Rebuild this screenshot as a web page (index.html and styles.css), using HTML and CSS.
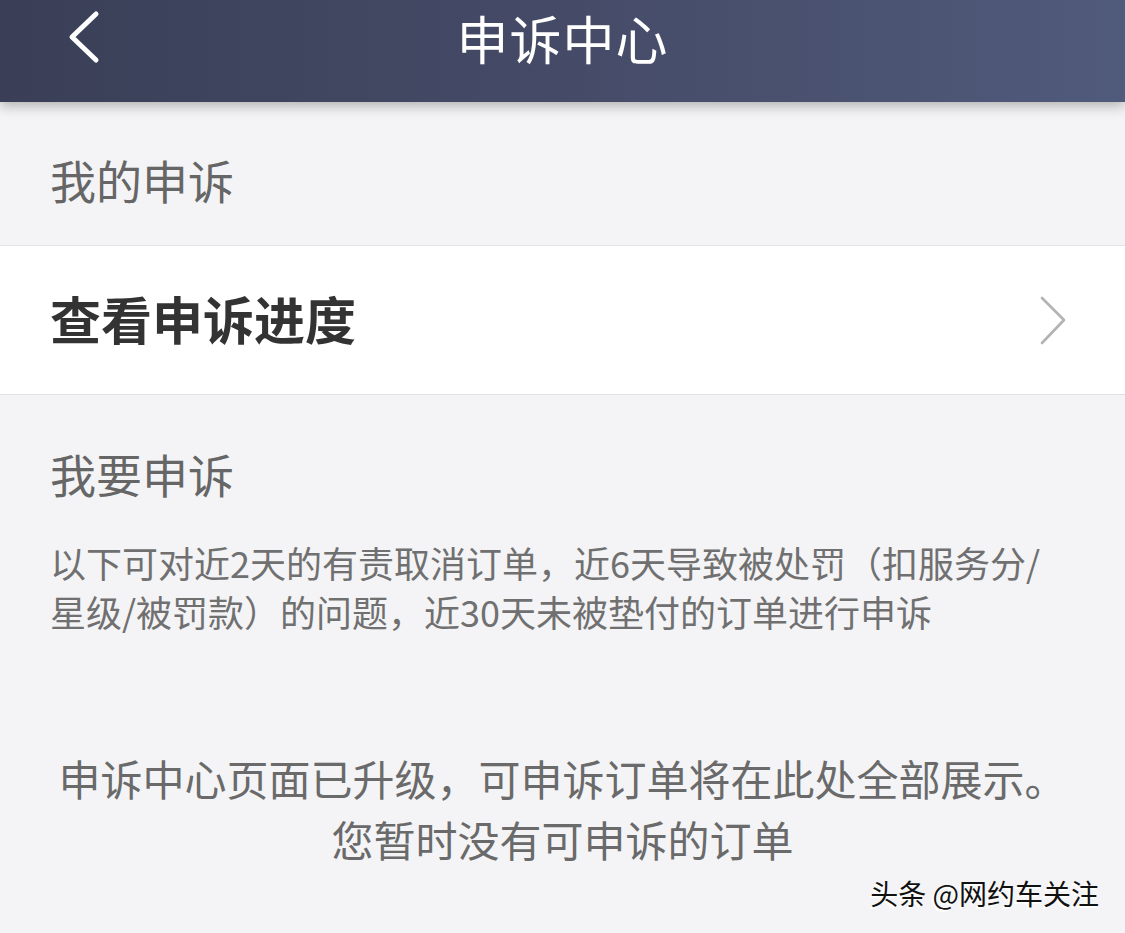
FILE: index.html
```html
<!DOCTYPE html>
<html lang="zh-CN">
<head>
<meta charset="utf-8">
<title>申诉中心</title>
<link rel="stylesheet" href="styles.css">
</head>
<body>
<div class="page">
  <header class="topbar">
    <div class="topbar-row">
      <div class="back">
        <svg class="back-icon" width="34" height="54" viewBox="0 0 34 54">
          <polyline points="29,4 5,27 29,50" fill="none" stroke="#ffffff" stroke-width="5" stroke-linecap="round" stroke-linejoin="round"/>
        </svg>
      </div>
      <h1 class="title">申诉中心</h1>
      <div></div>
    </div>
  </header>

  <section class="section-head first">
    <h2 class="section-title">我的申诉</h2>
  </section>

  <div class="list-row">
    <span class="row-label">查看申诉进度</span>
    <svg class="chevron" width="28" height="50" viewBox="0 0 28 50">
      <polyline points="3,2 25,24 3,47" fill="none" stroke="#b3b3b3" stroke-width="2.6" stroke-linecap="round" stroke-linejoin="round"/>
    </svg>
  </div>

  <section class="section-head second">
    <h2 class="section-title">我要申诉</h2>
    <p class="desc">以下可对近2天的有责取消订单，近6天导致被处罚（扣服务分/星级/被罚款）的问题，近30天未被垫付的订单进行申诉</p>
  </section>

  <div class="empty">
    <p class="empty-text">申诉中心页面已升级，可申诉订单将在此处全部展示。<br>您暂时没有可申诉的订单</p>
  </div>

  <div class="watermark">头条 @网约车关注</div>
</div>
</body>
</html>
```

FILE: styles.css
```css
html, body {
  margin: 0;
  padding: 0;
}
body {
  background: #f4f4f6;
  font-family: "Noto Sans CJK SC", "Noto Sans", "Liberation Sans", sans-serif;
  width: 1125px;
  height: 933px;
  overflow: hidden;
}
.page {
  position: relative;
  width: 1125px;
  height: 933px;
  background: #f4f4f6;
}
.topbar {
  height: 102px;
  background: linear-gradient(90deg, #3a3f57 0%, #454b67 50%, #505a7b 100%);
  box-shadow: 0 4px 12px rgba(0, 0, 0, 0.28);
  position: relative;
  z-index: 2;
}
.topbar-row {
  display: grid;
  grid-template-columns: 1fr auto 1fr;
  align-items: center;
  height: 76px;
}
.back {
  padding-left: 67px;
  padding-bottom: 2px;
  display: flex;
  align-items: center;
}
.back-icon {
  display: block;
}
.title {
  margin: 0;
  color: #ffffff;
  font-size: 52px;
  font-weight: 400;
  line-height: 76px;
  letter-spacing: 1px;
}
.section-head {
  padding: 0 50px;
}
.section-head.first {
  padding-top: 47px;
  padding-bottom: 36px;
}
.section-head.second {
  padding-top: 48px;
}
.section-title {
  margin: 0;
  font-size: 46px;
  font-weight: 400;
  line-height: 60px;
  color: #666666;
}
.list-row {
  height: 148px;
  background: #ffffff;
  border-top: 1px solid #e4e4e8;
  border-bottom: 1px solid #e1e1e4;
  display: flex;
  align-items: center;
  justify-content: space-between;
  padding: 0 58px 0 50px;
}
.row-label {
  font-size: 51px;
  font-weight: 700;
  color: #333333;
  line-height: 74px;
  padding-bottom: 4px;
}
.chevron {
  display: block;
  margin-top: 2px;
}
.desc {
  margin: 35px 0 0;
  font-size: 36px;
  line-height: 49px;
  color: #707070;
  width: 1010px;
}
.empty {
  margin-top: 111px;
  text-align: center;
}
.empty-text {
  margin: 0;
  font-size: 42px;
  line-height: 61px;
  color: #6a6a6a;
}
.watermark {
  position: absolute;
  right: 26px;
  top: 872px;
  font-size: 28px;
  line-height: 42px;
  color: #111111;
  text-shadow: -1px 1px 0 #ffffff, -2px 2px 1px rgba(255,255,255,0.8);
}
```
